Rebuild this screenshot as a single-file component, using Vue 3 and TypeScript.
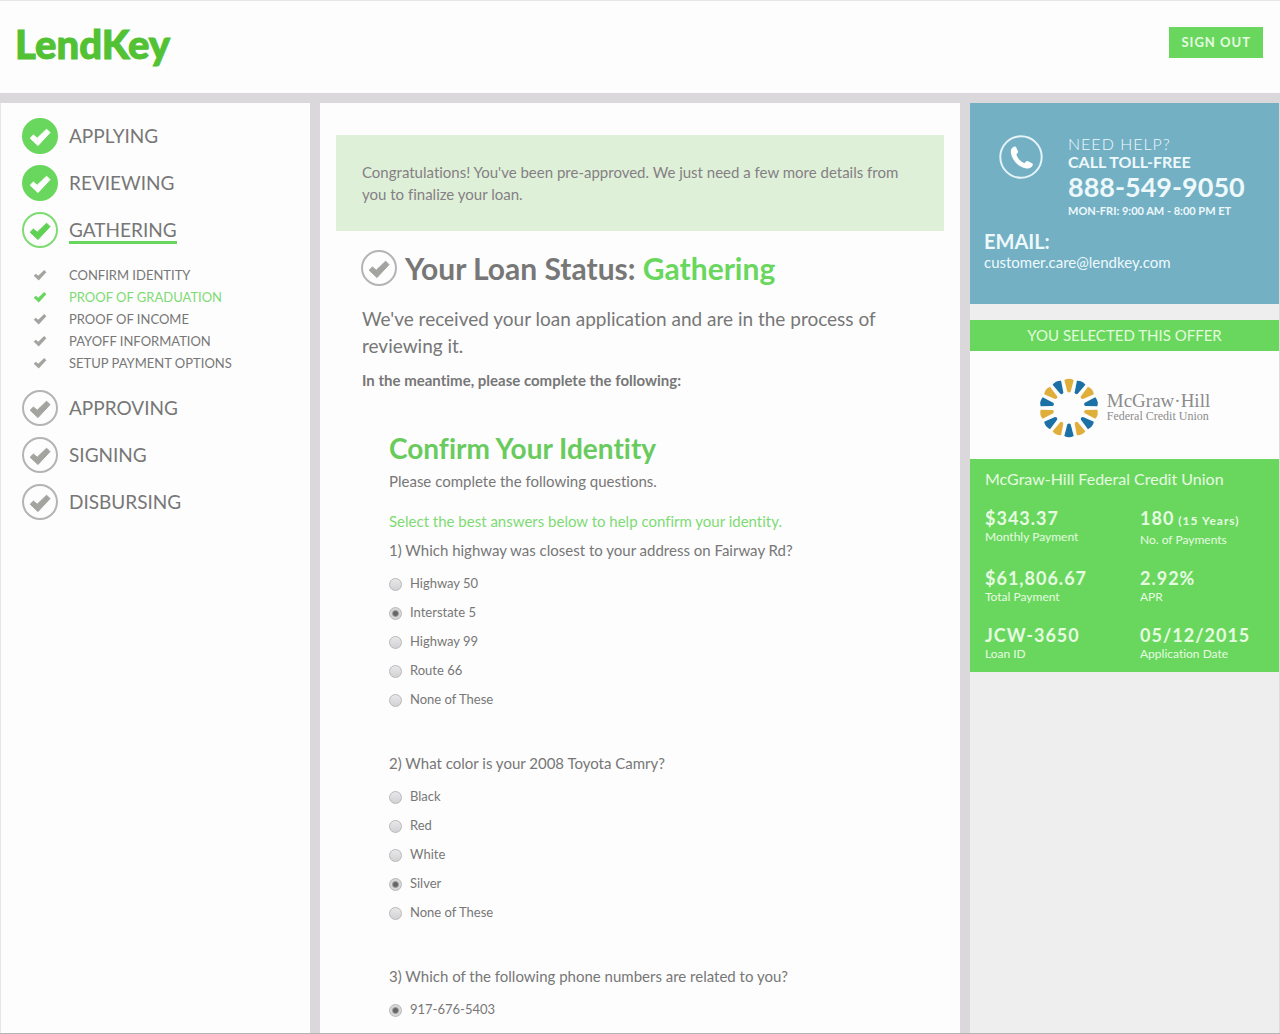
<script setup lang="ts">
import { reactive } from 'vue'

type StepState = 'done' | 'current' | 'pending'
interface Step { label: string; state: StepState; children?: { label: string; active: boolean }[] }
interface Question { id: string; text: string; options: string[] }

const CHECK = 'M8.2 20.2 L11.4 17 L15.2 20.2 L24.6 11.2 L28 14.6 L16 27.6 Z'

const steps: Step[] = [
  { label: 'Applying', state: 'done' },
  { label: 'Reviewing', state: 'done' },
  {
    label: 'Gathering',
    state: 'current',
    children: [
      { label: 'Confirm Identity', active: false },
      { label: 'Proof of Graduation', active: true },
      { label: 'Proof of Income', active: false },
      { label: 'Payoff Information', active: false },
      { label: 'Setup Payment Options', active: false },
    ],
  },
  { label: 'Approving', state: 'pending' },
  { label: 'Signing', state: 'pending' },
  { label: 'Disbursing', state: 'pending' },
]

const questions: Question[] = [
  {
    id: 'highway',
    text: '1) Which highway was closest to your address on Fairway Rd?',
    options: ['Highway 50', 'Interstate 5', 'Highway 99', 'Route 66', 'None of These'],
  },
  {
    id: 'color',
    text: '2) What color is your 2008 Toyota Camry?',
    options: ['Black', 'Red', 'White', 'Silver', 'None of These'],
  },
  {
    id: 'phone',
    text: '3) Which of the following phone numbers are related to you?',
    options: ['917-676-5403', ''],
  },
]

const answers = reactive<Record<string, string>>({
  highway: 'Interstate 5',
  color: 'Silver',
  phone: '917-676-5403',
})

const stats = [
  { value: '$343.37', label: 'Monthly Payment' },
  { value: '180', note: '(15 Years)', label: 'No. of Payments' },
  { value: '$61,806.67', label: 'Total Payment' },
  { value: '2.92%', label: 'APR' },
  { value: 'JCW-3650', label: 'Loan ID' },
  { value: '05/12/2015', label: 'Application Date' },
]

const petals = Array.from({ length: 14 }, (_, i) => ({
  angle: (i * 360) / 14,
  color: i % 2 === 0 ? '#e0ae3a' : '#1b70a6',
}))
</script>

<template>
  <div class="page">
    <header class="top">
      <a href="#" class="brand">LendKey</a>
      <button type="button" class="signout">SIGN OUT</button>
    </header>

    <div class="columns">
      <nav class="steps" aria-label="Loan progress">
        <ul class="list">
          <li v-for="step in steps" :key="step.label">
            <a href="#" class="step" :class="step.state">
              <svg class="badge" viewBox="0 0 36 36" aria-hidden="true">
                <circle cx="18" cy="18" r="17" />
                <path :d="CHECK" />
              </svg>
              <span class="step-label">{{ step.label }}</span>
            </a>
            <ul v-if="step.children" class="sublist">
              <li v-for="child in step.children" :key="child.label">
                <a href="#" class="substep" :class="{ active: child.active }">
                  <svg class="tick" viewBox="7 9 22 20" aria-hidden="true"><path :d="CHECK" /></svg>
                  <span>{{ child.label }}</span>
                </a>
              </li>
            </ul>
          </li>
        </ul>
      </nav>

      <main class="main">
        <p class="alert">
          Congratulations! You've been pre-approved. We just need a few more details from you to finalize your loan.
        </p>
        <div class="status">
          <h1 class="status-title">
            <svg class="badge" viewBox="0 0 36 36" aria-hidden="true">
              <circle cx="18" cy="18" r="17" />
              <path :d="CHECK" />
            </svg>
            <span>Your Loan Status: <em>Gathering</em></span>
          </h1>
          <p class="lead">We've received your loan application and are in the process of reviewing it.</p>
          <p class="meantime">In the meantime, please complete the following:</p>
        </div>

        <form class="identity" @submit.prevent>
          <h2>Confirm Your Identity</h2>
          <p class="sub">Please complete the following questions.</p>
          <p class="hint">Select the best answers below to help confirm your identity.</p>
          <fieldset v-for="q in questions" :key="q.id" class="question">
            <legend>{{ q.text }}</legend>
            <label v-for="option in q.options" :key="option" class="option">
              <input
                v-model="answers[q.id]"
                type="radio"
                :name="q.id"
                :value="option"
                :aria-label="option || 'Other'"
              />
              <span v-if="option">{{ option }}</span>
            </label>
          </fieldset>
        </form>
      </main>

      <aside class="side">
        <section class="help">
          <div class="call">
            <svg class="phone" viewBox="0 0 44 44" aria-hidden="true">
              <circle cx="22" cy="22" r="20.7" />
              <path d="M15.4 11.6 C13 12.6 11.4 15 11.8 17.6 C13 25.6 19.6 32.4 27.4 33.4 C30.4 33.8 33 32.4 33.8 30 C34 29.2 33.8 28.6 33 28.2 L29 26.2 C28.2 25.8 27.6 26 27 26.6 L25.4 28.2 C21.6 26.4 18.4 23.2 17.4 19.4 L18.8 17.8 C19.2 17.2 19.2 16.8 19 16.2 L17.2 12.4 C16.8 11.6 16.2 11.4 15.4 11.6 Z" />
            </svg>
            <div>
              <p class="need">NEED HELP?</p>
              <p class="toll">CALL TOLL-FREE</p>
              <p class="number">888-549-9050</p>
              <p class="hours">MON-FRI: 9:00 AM - 8:00 PM ET</p>
            </div>
          </div>
          <h3>EMAIL:</h3>
          <a href="mailto:customer.care@lendkey.com" class="mail">customer.care@lendkey.com</a>
        </section>

        <section class="offer">
          <h3 class="offer-head">YOU SELECTED THIS OFFER</h3>
          <div class="lender">
            <svg class="wheel" viewBox="-30 -30 60 60" aria-hidden="true">
              <path
                v-for="p in petals"
                :key="p.angle"
                d="M-4.7 -28 Q0 -30.6 4.7 -28 L1.7 -16.6 Q0 -14.4 -1.7 -16.6 Z"
                :fill="p.color"
                :transform="`rotate(${p.angle})`"
              />
            </svg>
            <div class="lender-name">
              <p class="lender-main">McGraw·Hill</p>
              <p class="lender-sub">Federal Credit Union</p>
            </div>
          </div>
          <div class="details">
            <h4>McGraw-Hill Federal Credit Union</h4>
            <dl class="stats">
              <div v-for="s in stats" :key="s.label" class="stat">
                <dd>{{ s.value }}<small v-if="s.note">{{ s.note }}</small></dd>
                <dt>{{ s.label }}</dt>
              </div>
            </dl>
          </div>
        </section>
      </aside>
    </div>
  </div>
</template>

<style>
body {
  margin: 0;
  background: #dbd8dc;
}
</style>

<style scoped>
.page {
  box-sizing: border-box;
  display: flex;
  flex-direction: column;
  height: 100vh;
  overflow: hidden;
  border-bottom: 1px solid #b4b4b4;
  background: #dbd8dc;
  color: #777;
  font-family: Lato, 'Liberation Sans', sans-serif;
  font-size: 15px;
  font-variant-ligatures: no-common-ligatures;
  line-height: 22px;
}
.page * {
  box-sizing: border-box;
}
p, h1, h2, h3, h4, ul, dl, dd, dt, fieldset, legend {
  margin: 0;
  padding: 0;
}
ul {
  list-style: none;
}
a {
  color: inherit;
  text-decoration: none;
}

.top {
  display: flex;
  flex: none;
  align-items: center;
  justify-content: space-between;
  height: 93px;
  padding: 0 17px 10px 15px;
  border-top: 1px solid #e6e6e6;
  background: #fdfdfd;
}
.brand {
  margin-top: 4px;
  color: #52c234;
  font-size: 40px;
  font-weight: 900;
  line-height: 52px;
  -webkit-text-stroke: 1px #52c234;
}
.signout {
  height: 31px;
  padding: 0 12px;
  border: 0;
  background: #69d75d;
  color: #e6fbe2;
  font-family: inherit;
  font-size: 13px;
  font-weight: 700;
  letter-spacing: 1px;
}

.columns {
  display: grid;
  flex: 1;
  grid-template-columns: 31fr 64fr 31fr;
  gap: 10px;
  min-height: 0;
  margin-top: 10px;
}
.steps {
  padding: 15px 21px;
  border-left: 1px solid #e6e6e6;
  background: #fdfdfd;
  text-transform: uppercase;
}
.list {
  display: flex;
  flex-direction: column;
  gap: 11px;
}
.step {
  display: flex;
  align-items: center;
  gap: 11px;
  font-size: 19px;
}
.badge {
  flex: none;
  width: 36px;
  height: 36px;
}
.badge circle {
  fill: none;
  stroke: #b4b4b4;
  stroke-width: 2;
}
.badge path {
  fill: #a3a3a0;
  stroke: #a3a3a0;
  stroke-width: 1;
  stroke-linejoin: round;
}
.done circle {
  fill: #69d75d;
  stroke: #69d75d;
}
.done path {
  fill: #fff;
  stroke: #fff;
}
.current circle {
  stroke: #7edb74;
}
.current path {
  fill: #5fd153;
  stroke: #5fd153;
}
.current .step-label {
  box-shadow: 0 3px #69d75d;
}
.sublist {
  padding: 16px 0 5px 11px;
}
.substep {
  display: flex;
  align-items: center;
  gap: 22px;
  font-size: 13px;
}
.tick {
  width: 14px;
  height: 14px;
  fill: #a3a3a0;
}
.substep.active {
  color: #7edb74;
}
.substep.active .tick {
  fill: #69d75d;
}

.main {
  padding: 32px 16px;
  overflow: hidden;
  background: #fdfdfd;
}
.alert {
  padding: 26px;
  background: #dff0d8;
  color: #857f85;
}
.status {
  padding: 19px 26px 0 25px;
}
.status-title {
  display: flex;
  align-items: center;
  gap: 8px;
  font-size: 30px;
  line-height: 36px;
}
.status-title em {
  color: #69d75d;
  font-style: normal;
}
.lead {
  margin: 19px 0 10px 1px;
  font-size: 19px;
  line-height: 27px;
}
.meantime {
  margin-left: 1px;
  font-size: 15px;
  font-weight: 700;
}
.identity {
  padding: 39px 53px 0;
}
.identity h2 {
  color: #69cb5d;
  font-size: 28px;
  line-height: 36px;
}
.sub {
  margin: 4px 0 18px;
}
.hint {
  margin-bottom: 7px;
  color: #7edb74;
}
.question {
  min-width: 0;
  margin-bottom: 39px;
  border: 0;
}
.question legend {
  margin-bottom: 7px;
}
.option {
  display: flex;
  align-items: center;
  gap: 8px;
  height: 29px;
  font-size: 13px;
}
.option input {
  flex: none;
  appearance: none;
  width: 13px;
  height: 13px;
  margin: 4px 0 0;
  border: 1px solid #b8b8b8;
  border-radius: 50%;
  background: linear-gradient(#e8e8ea, #d2d2d4);
}
.option input:checked {
  background: radial-gradient(circle, #666 0 2px, #d8d8d8 4px);
}

.side {
  background: #eee;
  border-right: 1px solid #dcdcdc;
}
.help {
  padding: 32px 14px;
  background: #73b0c4;
  color: #eef9fc;
}
.call {
  display: flex;
  gap: 25px;
  padding-left: 15px;
}
.phone {
  flex: none;
  width: 44px;
  height: 44px;
  fill: #fff;
}
.phone circle {
  fill: none;
  stroke: #e4f4f9;
  stroke-width: 2;
}
.need {
  font-size: 16px;
  font-weight: 300;
  line-height: 18px;
  letter-spacing: 1px;
}
.toll {
  font-size: 16px;
  font-weight: 700;
  line-height: 18px;
}
.number {
  font-size: 27px;
  font-weight: 700;
  line-height: 32px;
}
.hours {
  font-size: 11px;
  font-weight: 700;
  line-height: 16px;
}
.help h3 {
  margin-top: 11px;
  font-size: 20px;
  line-height: 22px;
}
.mail {
  display: block;
  line-height: 20px;
}
.offer {
  margin-top: 16px;
}
.offer-head {
  background: #69d75d;
  color: #e2fbdd;
  font-size: 15px;
  font-weight: 400;
  line-height: 31px;
  text-align: center;
}
.lender {
  display: flex;
  align-items: center;
  justify-content: center;
  gap: 8px;
  height: 108px;
  padding-top: 6px;
  background: #fdfdfd;
}
.wheel {
  width: 60px;
  height: 60px;
}
.lender-name {
  color: #8c8c8c;
  font-family: 'Liberation Serif', serif;
}
.lender-main {
  font-size: 19px;
  line-height: 16px;
}
.lender-sub {
  font-size: 12px;
  line-height: 14px;
}
.details {
  padding: 9px 15px 10px;
  background: #69d75d;
  color: #e6fbe2;
}
.details h4 {
  font-size: 16px;
  font-weight: 400;
}
.stats {
  display: grid;
  grid-template-columns: 5fr 4fr;
  row-gap: 19px;
  margin-top: 17px;
}
.stat {
  display: flex;
  flex-direction: column;
}
.stat dd {
  font-size: 18px;
  font-weight: 700;
  letter-spacing: 1px;
  white-space: nowrap;
}
.stat dd small {
  margin-left: 4px;
  font-size: 12px;
}
.stat dt {
  font-size: 12px;
  line-height: 16px;
}
</style>
